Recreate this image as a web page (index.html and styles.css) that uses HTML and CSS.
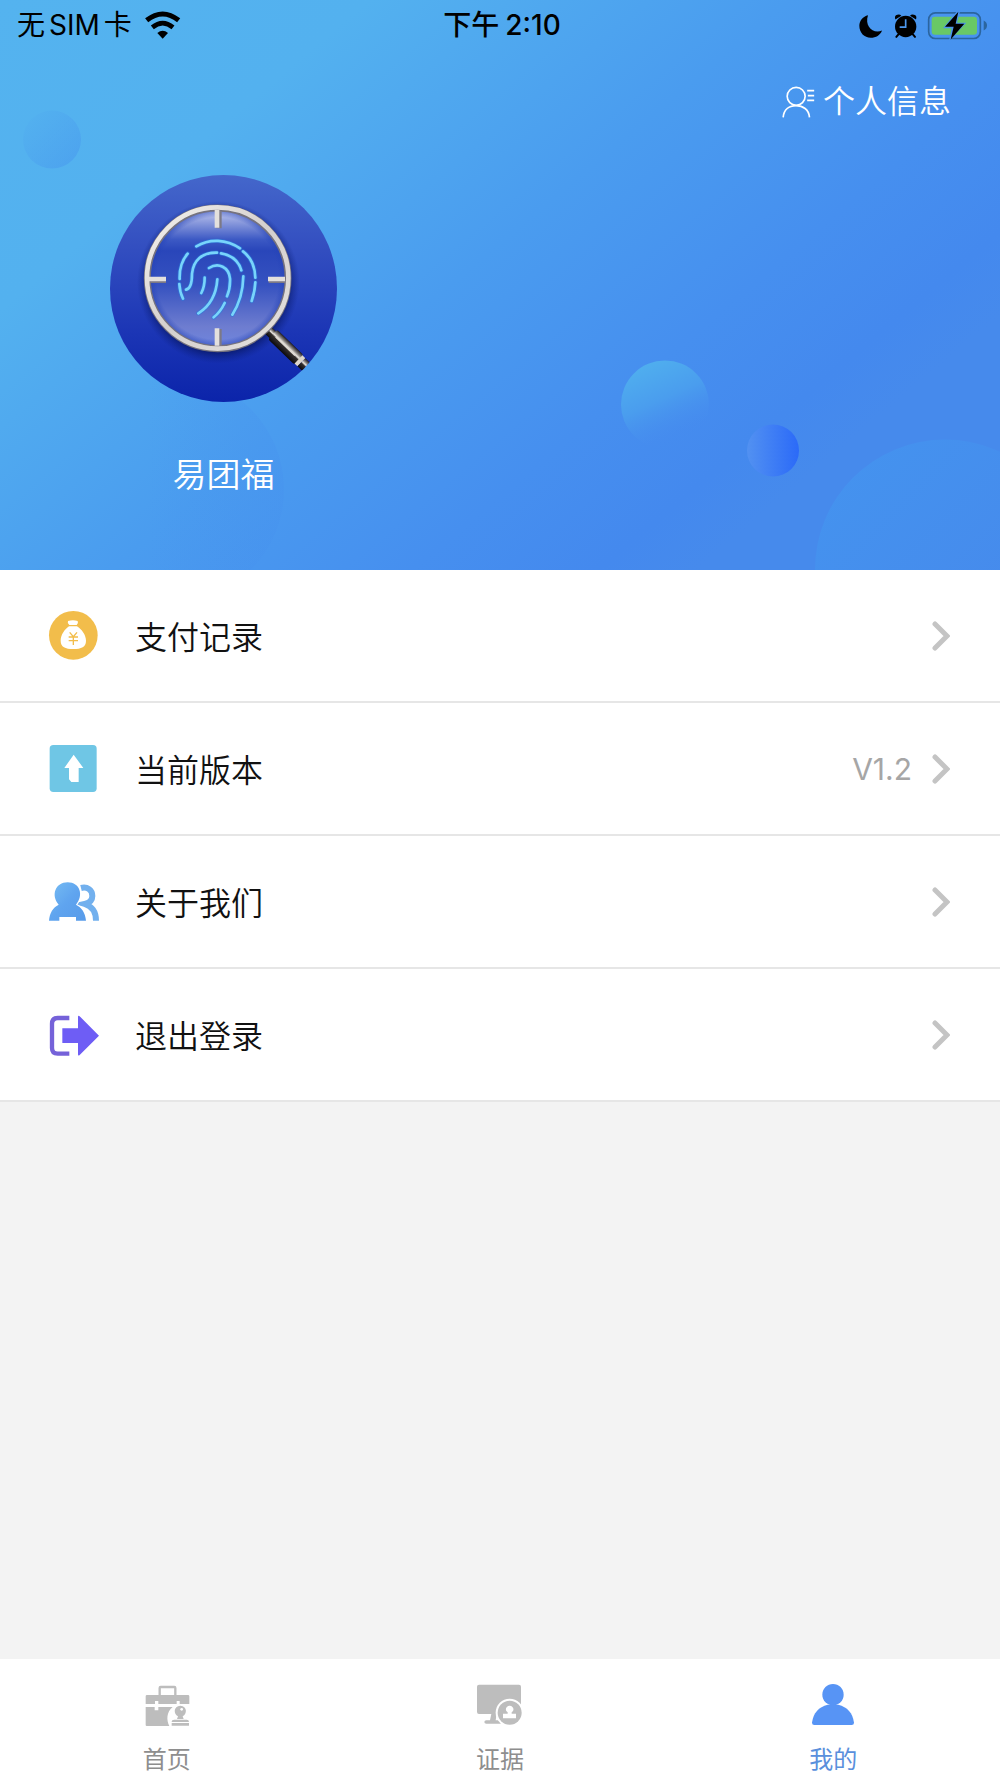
FILE: index.html
```html
<!DOCTYPE html>
<html lang="zh-CN">
<head>
<meta charset="utf-8">
<meta name="viewport" content="width=device-width, initial-scale=1">
<title>我的</title>
<link rel="stylesheet" href="styles.css">
</head>
<body>
<div class="app">
  <header class="hero">
    <svg class="hero-bubbles" viewBox="0 0 1000 571" preserveAspectRatio="xMidYMid slice" aria-hidden="true">
      <defs>
        <linearGradient id="b1" x1="0" y1="0" x2="1" y2="1"><stop offset="0" stop-color="#4a9bef" stop-opacity="0"/><stop offset="1" stop-color="#4899ee" stop-opacity=".65"/></linearGradient>
        <linearGradient id="b2" x1=".25" y1="0" x2=".7" y2="1"><stop offset="0" stop-color="#50b0ee"/><stop offset=".45" stop-color="#4a9dee"/><stop offset=".9" stop-color="#4689ee" stop-opacity="0"/></linearGradient>
        <linearGradient id="b3" x1="0" y1="0" x2="1" y2="0"><stop offset="0" stop-color="#5291f1"/><stop offset="1" stop-color="#2b6af8"/></linearGradient>
        <linearGradient id="b4" x1="0" y1="0" x2=".7" y2=".7"><stop offset="0" stop-color="#4494ef"/><stop offset="1" stop-color="#468aec"/></linearGradient>
        <linearGradient id="b5" x1="0" y1="0" x2="1" y2="0"><stop offset=".4" stop-color="#4690ee" stop-opacity="0"/><stop offset="1" stop-color="#4690ee" stop-opacity=".3"/></linearGradient>
      </defs>
      <circle cx="52" cy="140" r="29" fill="url(#b1)"/>
      <circle cx="170" cy="490" r="114" fill="url(#b5)"/>
      <circle cx="665" cy="405" r="44" fill="url(#b2)"/>
      <circle cx="773" cy="451" r="26" fill="url(#b3)"/>
      <circle cx="945" cy="570" r="130" fill="url(#b4)"/>
    </svg>

    <div class="status">
      <div class="status-left">
        <span class="carrier"><span>无</span><span>SIM</span><span>卡</span></span>
        <svg class="wifi" viewBox="432 28 111 84" aria-hidden="true">
          <path d="M440 56Q488 18 536 56" fill="none" stroke="#000" stroke-width="15"/>
          <path d="M457 77Q488 52 519 77" fill="none" stroke="#000" stroke-width="14"/>
          <path d="M472 94Q488 80 504 94L488 111Z"/>
        </svg>
      </div>
      <div class="clock"><span>下午</span><span>2:10</span></div>
      <svg class="status-icons" viewBox="478 26 384 92" aria-hidden="true">
        <path d="M505 41C490 44 479 58 479 73C479 94 494 109 513 109C529 109 542 101 547 87C520 98 494 74 505 41Z"/>
        <circle cx="618" cy="75" r="32"/>
        <path d="M587 54Q583 42 593 40Q600 37 605 43ZM649 54Q653 42 643 40Q636 37 631 43Z"/>
        <path d="M597 98L590 106M639 98L646 106" stroke="#000" stroke-width="6" stroke-linecap="round"/>
        <path d="M618 53V77H600" fill="none" stroke="#4c98ee" stroke-width="5"/>
        <rect x="687" y="34" width="155" height="77" rx="20" fill="none" stroke="#2b659f" stroke-width="5"/>
        <rect x="696" y="46" width="136" height="54" rx="10" fill="#69c866"/>
        <path d="M852 57Q862 62 862 72Q862 82 852 87Z" fill="#2b659f"/>
        <path d="M774 26L730 80H756L748 118L800 64H772L782 26Z" fill="#4a93ee"/>
        <path d="M776 31L736 76H762L753 114L794 67H768Z"/>
      </svg>
    </div>

    <a class="profile-link" href="#profile">
      <svg class="profile-icon" viewBox="246 256 98 96" aria-hidden="true">
        <g fill="none" stroke="#fff" stroke-width="5">
          <circle cx="288" cy="287" r="27"/>
          <path d="M249 350C251 326 268 315 288 315C308 315 326 326 328 350M321 270H342M323 285H342M321 299H342"/>
        </g>
      </svg>
      <span>个人信息</span>
    </a>

    <div class="user">
      <svg class="avatar" viewBox="31 44 681 681" role="img" aria-label="头像">
        <defs>
          <linearGradient id="a1" x1="0" y1="0" x2="0" y2="1"><stop offset="0" stop-color="#4467cb"/><stop offset=".3" stop-color="#3450c1"/><stop offset=".7" stop-color="#1b35b5"/><stop offset="1" stop-color="#0b24aa"/></linearGradient>
          <linearGradient id="a2" x1="0" y1="0" x2="0" y2="1"><stop offset="0" stop-color="#cdd4f5"/><stop offset=".08" stop-color="#95a3e0"/><stop offset=".22" stop-color="#3c59c4"/><stop offset=".3" stop-color="#2946ba"/><stop offset=".55" stop-color="#3652c0"/><stop offset=".85" stop-color="#6e7dd0"/><stop offset="1" stop-color="#6f86df"/></linearGradient>
          <linearGradient id="a3" x1="0" y1="0" x2="1" y2="1"><stop offset="0" stop-color="#f5f2ee"/><stop offset=".5" stop-color="#d4d0ce"/><stop offset="1" stop-color="#e4e1de"/></linearGradient>
          <radialGradient id="a4"><stop offset=".84" stop-color="#051355" stop-opacity=".75"/><stop offset="1" stop-color="#0b1f80" stop-opacity="0"/></radialGradient>
          <radialGradient id="a6"><stop offset=".88" stop-color="#2342b8" stop-opacity="0"/><stop offset="1" stop-color="#2342b8" stop-opacity=".7"/></radialGradient>
          <linearGradient id="a5" x1="0" y1="0" x2="0" y2="1"><stop offset="0" stop-color="#1a1820"/><stop offset=".25" stop-color="#8d8884"/><stop offset=".42" stop-color="#f2eee8"/><stop offset=".55" stop-color="#35302e"/><stop offset="1" stop-color="#0a090c"/></linearGradient>
          <clipPath id="disc"><circle cx="371.500" cy="384.500" r="340.500"/></clipPath>
        </defs>
        <g clip-path="url(#disc)">
          <rect x="31" y="44" width="681" height="681" fill="url(#a1)"/>
          <circle cx="356" cy="366" r="244" fill="url(#a4)"/>
          <g transform="translate(503 507) rotate(44)">
            <rect x="0" y="-14" width="30" height="28" fill="url(#a5)"/>
            <rect x="22" y="-20" width="110" height="40" rx="8" fill="url(#a5)"/>
            <rect x="34" y="-4" width="80" height="5" fill="#ded9d2"/>
            <rect x="130" y="-17" width="12" height="34" fill="#dcd6cc"/>
            <rect x="142" y="-17" width="50" height="34" fill="url(#a5)"/>
          </g>
          <circle cx="354" cy="354" r="208" fill="url(#a2)"/>
          <circle cx="354" cy="354" r="208" fill="url(#a6)"/>
          <circle cx="354" cy="354" r="211" fill="none" stroke="#75727e" stroke-width="21"/>
          <circle cx="354" cy="353" r="212" fill="none" stroke="url(#a3)" stroke-width="14"/>
          <path d="M358 152V204M358 506V556M152 360H199M507 360H556" stroke="#7c7986" stroke-width="16"/>
          <path d="M352 148V202M352 504V556M148 356H199M505 356H556" stroke="#e3e0dd" stroke-width="14"/>
          <path d="M290 258C330 234 380 236 421 264M430 273C457 294 466 320 467 352M467 366C466 387 463 402 456 422M264 280C244 303 239 328 240 356M239 371C240 388 243 401 250 415M352 277C307 276 281 300 277 340C277 362 275 385 259 388M364 279C397 285 417 301 425 330M328 323C356 305 388 320 391 355C392 378 389 392 382 408M431 348C430 394 417 434 398 463M353 357C350 401 329 438 296 459M315 352C315 373 312 384 305 398M375 428C366 447 357 459 342 471" fill="none" stroke="#2c7bdc" stroke-width="13" stroke-linecap="round" opacity=".6"/>
          <path d="M290 258C330 234 380 236 421 264M430 273C457 294 466 320 467 352M467 366C466 387 463 402 456 422M264 280C244 303 239 328 240 356M239 371C240 388 243 401 250 415M352 277C307 276 281 300 277 340C277 362 275 385 259 388M364 279C397 285 417 301 425 330M328 323C356 305 388 320 391 355C392 378 389 392 382 408M431 348C430 394 417 434 398 463M353 357C350 401 329 438 296 459M315 352C315 373 312 384 305 398M375 428C366 447 357 459 342 471" fill="none" stroke="#78d4fb" stroke-width="8" stroke-linecap="round"/>
        </g>
      </svg>
      <h1 class="user-name">易团福</h1>
    </div>
  </header>

  <main class="content">
    <ul class="menu">
      <li>
        <a class="menu-row" href="#payments">
          <svg class="menu-icon" viewBox="142 123 153 153" aria-hidden="true">
            <circle cx="218" cy="199" r="73" fill="#f2bd4b"/>
            <path d="M202 156Q217 152 231 156Q234 162 228 168H206Q199 162 202 156ZM205 172H229C243 181 256 198 256 215C256 234 242 240 218 240C194 240 180 234 180 215C180 198 192 181 205 172Z" fill="#fff"/>
            <path d="M207 190L218 203L229 190M218 203V228M204 204H232M204 215H232" fill="none" stroke="#f2bd4b" stroke-width="4"/>
          </svg>
          <span class="menu-label">支付记录</span>
          <svg class="chevron" viewBox="0 0 18 30" aria-hidden="true"><path d="M3 3L15 15L3 27"/></svg>
        </a>
      </li>
      <li>
        <a class="menu-row" href="#version">
          <svg class="menu-icon" viewBox="142 525 153 153" aria-hidden="true">
            <rect x="147" y="531" width="141" height="141" rx="11" fill="#6fc6e5"/>
            <path d="M219 560L248 600H234V642H212L205 634V600H191Z" fill="#fff"/>
          </svg>
          <span class="menu-label">当前版本</span>
          <span class="menu-value">V1.2</span>
          <svg class="chevron" viewBox="0 0 18 30" aria-hidden="true"><path d="M3 3L15 15L3 27"/></svg>
        </a>
      </li>
      <li>
        <a class="menu-row" href="#about">
          <svg class="menu-icon" viewBox="142 111 153 153" aria-hidden="true">
            <defs><linearGradient id="p1" x1="0" y1="0" x2="1" y2="1"><stop offset="0" stop-color="#77bdf3"/><stop offset=".5" stop-color="#5fa4ef"/><stop offset="1" stop-color="#589be9"/></linearGradient></defs>
            <path d="M241 147C260 142 275 153 275 171C275 184 266 192 252 195C275 202 286 220 286 245" fill="none" stroke="#72b0ee" stroke-width="18"/>
            <path d="M145 245C147 221 157 205 174 197C150 169 164 130 201 130C238 130 250 169 226 197C243 205 254 221 256 245H226V234H176V245Z" fill="url(#p1)" stroke="#fff" stroke-width="6" paint-order="stroke"/>
          </svg>
          <span class="menu-label">关于我们</span>
          <svg class="chevron" viewBox="0 0 18 30" aria-hidden="true"><path d="M3 3L15 15L3 27"/></svg>
        </a>
      </li>
      <li>
        <a class="menu-row" href="#logout">
          <svg class="menu-icon" viewBox="142 510 153 153" aria-hidden="true">
            <path d="M206 537H171Q154 537 154 554V627Q154 644 171 644H206" fill="none" stroke="#7562d9" stroke-width="13"/>
            <path d="M185 568H232V534Q232 528 237 532L295 590L237 648Q232 652 232 646V612H185Z" fill="#6e5df5"/>
          </svg>
          <span class="menu-label">退出登录</span>
          <svg class="chevron" viewBox="0 0 18 30" aria-hidden="true"><path d="M3 3L15 15L3 27"/></svg>
        </a>
      </li>
    </ul>
  </main>

  <nav class="tabs">
    <a class="tab" href="#home">
      <svg class="tab-icon" viewBox="128 126 144 144" aria-hidden="true">
        <path d="M178 166V144Q178 141 181 141H222Q225 141 225 144V166" fill="none" stroke="#bdbdbd" stroke-width="7"/>
        <path d="M136 169Q136 165 140 165H263Q267 165 267 169V192H238V183H229V192H174V183H164V192H136ZM136 201H163V211H174V201H217C198 217 198 240 207 258H139Q136 258 136 255ZM233 229C219 222 219 198 240 197C261 198 261 222 247 229L250 237H230ZM222 239H259Q266 239 266 246H214Q214 239 222 239ZM214 249H266V257H214Z" fill="#bdbdbd"/>
        <circle cx="244" cy="208" r="4" fill="#fff"/>
      </svg>
      <span>首页</span>
    </a>
    <a class="tab" href="#evidence">
      <svg class="tab-icon" viewBox="1128 126 144 144" aria-hidden="true">
        <path d="M1137 134H1257Q1263 134 1263 140V222H1190L1187 241H1202V251H1159Q1153 251 1153 246T1159 241H1170L1174 222H1137Q1131 222 1131 216V140Q1131 134 1137 134Z" fill="#bdbdbd"/>
        <circle cx="1229" cy="218" r="42" fill="#fff"/>
        <circle cx="1229" cy="218" r="36" fill="#bdbdbd"/>
        <path d="M1223 217C1213 211 1218 197 1229 197C1240 197 1245 211 1235 217V221H1248V235H1209V221H1223Z" fill="#fff"/>
      </svg>
      <span>证据</span>
    </a>
    <a class="tab tab-active" href="#me" aria-current="page">
      <svg class="tab-icon" viewBox="148 126 144 144" aria-hidden="true">
        <circle cx="220" cy="164" r="32" fill="#5794f5"/>
        <path d="M157 248C161 218 177 201 204 194H236C263 201 279 218 283 248Q283 255 276 255H164Q157 255 157 248Z" fill="#5794f5"/>
      </svg>
      <span>我的</span>
    </a>
  </nav>
</div>
</body>
</html>
```
FILE: styles.css
```css
* {
  box-sizing: border-box;
}

body {
  margin: 0;
  font-family: Inter, "Noto Sans CJK SC", sans-serif;
  background: #f3f3f3;
  color: #111;
}

a {
  color: inherit;
  text-decoration: none;
}

svg {
  display: block;
  flex: none;
}

.app {
  display: flex;
  flex-direction: column;
  min-height: 100vh;
}

/* Header */
.hero {
  position: relative;
  display: flex;
  flex-direction: column;
  padding-bottom: 71px;
  background: linear-gradient(140deg, #54b3ef 0%, #53b1ef 22%, #4a9cef 47%, #468fef 65%, #4489ee 76%, #468aec 82%, #468aec 100%);
}

.hero-bubbles {
  position: absolute;
  inset: 0;
  width: 100%;
  height: 100%;
}

.status,
.profile-link,
.user {
  position: relative;
}

.status {
  display: grid;
  grid-template-columns: 1fr auto 1fr;
  align-items: center;
  height: 50px;
  padding: 0 13px 0 17px;
  font-size: 28px;
  line-height: 40px;
  color: #000;
}

.status-left {
  display: flex;
  align-items: center;
  gap: 12px;
}

.carrier {
  display: flex;
  gap: 4px;
}

.wifi {
  width: 37px;
  height: 28px;
}

.clock {
  display: flex;
  gap: 6px;
  font-weight: 500;
}

.status-icons {
  justify-self: end;
  width: 128px;
  height: 31px;
}

.profile-link {
  display: flex;
  align-items: center;
  align-self: flex-end;
  gap: 8px;
  margin: 28px 49px 0 0;
  font-size: 32px;
  font-weight: 350;
  line-height: 48px;
  color: #fff;
}

.profile-icon {
  width: 33px;
  height: 32px;
}

.user {
  display: flex;
  flex-direction: column;
  align-items: center;
  align-self: flex-start;
  gap: 49px;
  margin: 49px 0 0 110px;
}

.avatar {
  width: 227px;
  height: 227px;
}

.user-name {
  margin: 0;
  font-size: 34px;
  font-weight: 350;
  line-height: 48px;
  color: #fff;
}

/* Menu */
.content {
  flex: 1;
}

.menu {
  margin: 0;
  padding: 0;
  list-style: none;
  background: #fff;
}

.menu-row {
  display: flex;
  align-items: center;
  height: 133px;
  padding: 0 50px 0 48px;
  border-bottom: 2px solid #e6e6e6;
  font-size: 32px;
  line-height: 48px;
}

.menu-icon {
  width: 51px;
  height: 51px;
  margin-right: 36px;
}

.menu-label {
  flex: 1;
  padding-top: 4px;
  font-weight: 350;
}

.menu-value {
  margin-right: 20px;
  font-size: 30px;
  color: #a6a6a6;
}

.chevron {
  width: 18px;
  height: 30px;
  fill: none;
  stroke: #c4c4c4;
  stroke-width: 5;
  stroke-linecap: round;
}

/* Bottom tabs */
.tabs {
  display: grid;
  grid-template-columns: repeat(3, 1fr);
  background: #fff;
}

.tab {
  display: flex;
  flex-direction: column;
  align-items: center;
  gap: 14px;
  padding: 23px 0 2px;
  font-size: 24px;
  line-height: 32px;
  color: #8e8e8e;
}

.tab-active {
  color: #5a8fdc;
}

.tab-icon {
  width: 48px;
  height: 48px;
}
```
